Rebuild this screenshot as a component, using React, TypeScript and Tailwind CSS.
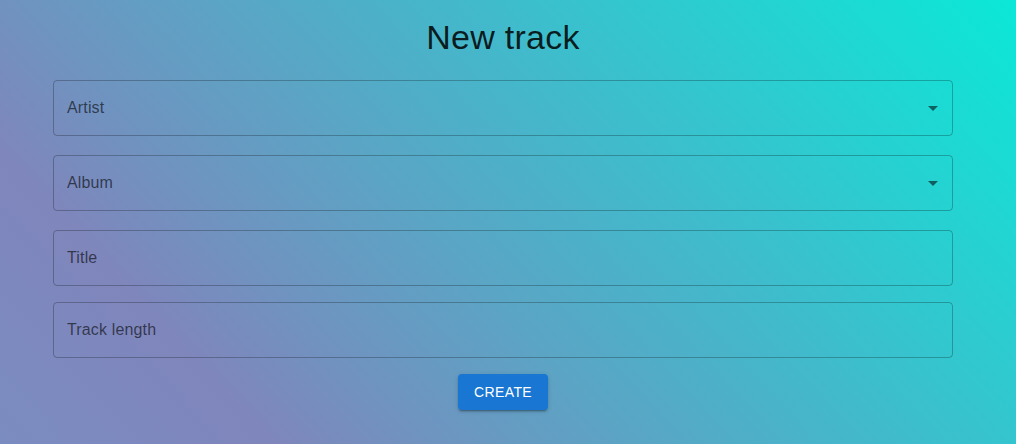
import React from 'react';

const fields = [
  { label: 'Artist', select: true },
  { label: 'Album', select: true },
  { label: 'Title', select: false },
  { label: 'Track length', select: false },
];

const ArrowDropDown = () => (
  <svg viewBox="0 0 24 24" className="w-6 h-6 fill-black/55">
    <path d="M7 10l5 5 5-5z" />
  </svg>
);

const Field = ({ label, select }: { label: string; select: boolean }) => (
  <div className="h-14 w-full rounded border border-black/25 flex items-center justify-between pl-[13px] pr-[7px]">
    <span className="text-base text-black/60 tracking-[0.15px]">{label}</span>
    {select && <ArrowDropDown />}
  </div>
);

const App = () => {
  return (
    <div className="min-h-[444px] w-full bg-[linear-gradient(47deg,#7b8cc1_0%,#7f86bc_19%,#0be8d8_100%)] font-['Liberation_Sans','Helvetica',Arial,sans-serif]">
      <div className="flex justify-center pr-[10px]">
        <div className="w-[900px] flex flex-col items-center pt-4">
          {/* Heading */}
          <h4 className="text-[34px] leading-[42px] text-black/85 font-normal tracking-[0.25px]">
            New track
          </h4>

          {/* Form */}
          <div className="w-full mt-[22px] flex flex-col">
            <Field {...fields[0]} />
            <div className="mt-[19px]">
              <Field {...fields[1]} />
            </div>
            <div className="mt-[19px]">
              <Field {...fields[2]} />
            </div>
            <div className="mt-4">
              <Field {...fields[3]} />
            </div>
          </div>

          <button className="mt-4 h-9 px-4 rounded bg-[#1976d2] text-white text-sm font-medium uppercase tracking-[0.4px] shadow-[0px_3px_1px_-2px_rgba(0,0,0,0.2),0px_2px_2px_0px_rgba(0,0,0,0.14),0px_1px_5px_0px_rgba(0,0,0,0.12)]">
            Create
          </button>
        </div>
      </div>
    </div>
  );
};

export default App;
